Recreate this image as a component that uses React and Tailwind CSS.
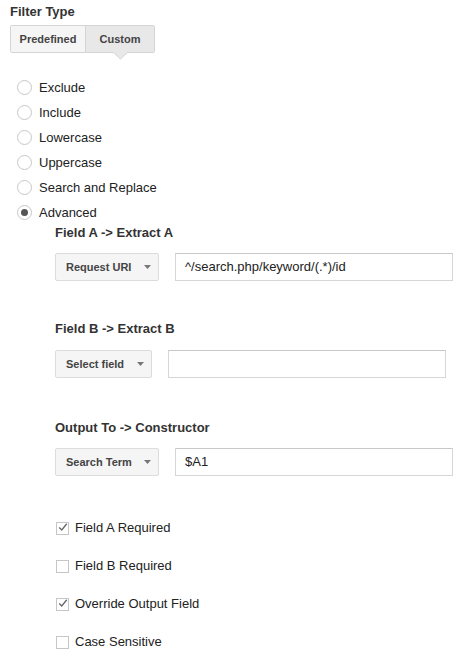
import React from "react";

const radios = ["Exclude", "Include", "Lowercase", "Uppercase", "Search and Replace", "Advanced"];

const Caret = () => (
  <svg width="7" height="4" viewBox="0 0 7 4" className="ml-auto">
    <path d="M0 0 L7 0 L3.5 4 Z" fill="#777" />
  </svg>
);

const Radio = ({ label, checked }) => (
  <div className="flex items-center h-[25px]">
    <span className="ml-[7px] w-[15px] h-[15px] rounded-full border border-[#c8c8c8] bg-white flex items-center justify-center">
      {checked && <span className="w-[7px] h-[7px] rounded-full bg-[#555]" />}
    </span>
    <span className="ml-[7px] text-[13px] leading-[16px] text-[#222]">{label}</span>
  </div>
);

const Field = ({ label, select, width, value, mt }) => (
  <div className={mt}>
    <div className="text-[13px] leading-[16px] font-bold text-[#333]">{label}</div>
    <div className={`flex gap-[16px] ${label === "Field B -> Extract B" ? "mt-[13px]" : "mt-[12px]"}`}>
      <div
        className={`${width} h-[28px] flex items-center pl-[10px] pr-[7px] bg-[#f5f5f5] border border-[#dcdcdc] rounded-[2px] text-[11px] font-bold text-[#444]`}
      >
        <span>{select}</span>
        <Caret />
      </div>
      <div className="w-[278px] h-[28px] flex items-center pl-[9px] bg-white border border-[#d6d6d6] border-t-[#c8c8c8] text-[13px] text-[#222]">
        {value}
      </div>
    </div>
  </div>
);

const Check = ({ label, checked }) => (
  <div className="flex items-center h-[16px]">
    <span className="ml-[1px] w-[13px] h-[13px] border border-[#c6c6c6] bg-white flex items-center justify-center">
      {checked && (
        <svg width="12" height="11" viewBox="0 0 12 11" className="-mt-[1px] ml-[1px]">
          <path d="M1.5 5.5 L4.5 8.5 L10.5 1" fill="none" stroke="#666" strokeWidth="1.6" />
        </svg>
      )}
    </span>
    <span className="ml-[6px] text-[13px] leading-[16px] text-[#222]">{label}</span>
  </div>
);

export default function App() {
  return (
    <div
      className="w-[470px] h-[662px] bg-white pl-[10px] pt-[3px]"
      style={{ fontFamily: '"Liberation Sans", Arial, sans-serif' }}
    >
      <div className="text-[13px] leading-[17px] font-bold text-[#333]">Filter Type</div>

      <div className="mt-[5px] flex w-[145px] h-[28px] border border-[#d4d4d4] rounded-[2px] text-[11px] font-bold text-[#444]">
        <div className="w-[75px] flex items-center justify-center bg-[#f5f5f5] border-r border-[#d4d4d4]">Predefined</div>
        <div className="relative flex-1 flex items-center justify-center bg-[#e8e8e8]">
          Custom
          <svg width="15" height="8" viewBox="0 0 15 8" className="absolute left-[27px] top-[26px]">
            <path d="M0 0 L7.5 7 L15 0" fill="#e8e8e8" stroke="#d4d4d4" strokeWidth="1" />
            <path d="M1 0 L14 0" stroke="#e8e8e8" strokeWidth="2" />
          </svg>
        </div>
      </div>

      <div className="mt-[22px]">
        {radios.map((r) => (
          <Radio key={r} label={r} checked={r === "Advanced"} />
        ))}
      </div>

      <div className="pl-[45px]">
        <Field label="Field A -> Extract A" select="Request URI" width="w-[104px]" value="^/search.php/keyword/(.*)/id" mt="" />
        <Field label="Field B -> Extract B" select="Select field" width="w-[97px]" value="" mt="mt-[40px]" />
        <Field label="Output To -> Constructor" select="Search Term" width="w-[104px]" value="$A1" mt="mt-[42px]" />

        <div className="mt-[44px] flex flex-col gap-[22px]">
          <Check label="Field A Required" checked />
          <Check label="Field B Required" />
          <Check label="Override Output Field" checked />
          <Check label="Case Sensitive" />
        </div>
      </div>
    </div>
  );
}
